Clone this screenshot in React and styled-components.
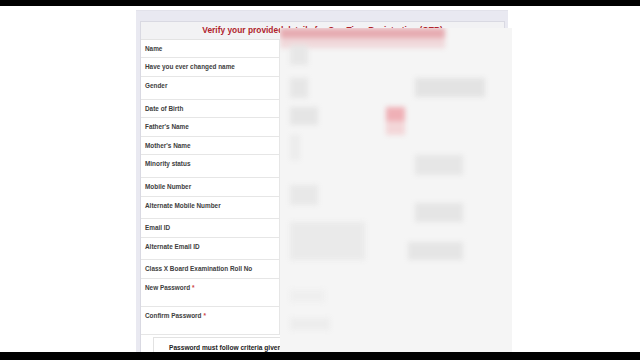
import React from 'react';
import styled, { createGlobalStyle } from 'styled-components';

const GlobalStyle = createGlobalStyle`
  body {
    margin: 0;
    background: #fff;
    font-family: "Liberation Sans", Arial, sans-serif;
  }
`;

const Screen = styled.div`
  width: 640px;
  height: 360px;
  display: flex;
  flex-direction: column;
  overflow: hidden;
`;

const Bar = styled.div`
  height: ${(p) => p.h}px;
  background: #000;
  flex-shrink: 0;
`;

const Stage = styled.div`
  flex: 1;
  position: relative;
  overflow: hidden;
  padding: 4px 0 0 136px;
`;

const Panel = styled.div`
  width: 372px;
  background: #e9e9f1;
  padding: 10px 3px 0 4px;
  box-sizing: border-box;
  border-top: 1px solid #e2e2ea;
`;

const Table = styled.div`
  background: #fff;
  border: 1px solid #d9d9e2;
  border-bottom: none;
`;

const Header = styled.div`
  height: 18px;
  background: #f2f2f4;
  border-bottom: 1px solid #e3e3e3;
  box-sizing: border-box;
  color: #b0232b;
  font-weight: bold;
  font-size: 8.4px;
  line-height: 17px;
  text-align: center;
  white-space: nowrap;
`;

const Row = styled.div`
  display: grid;
  grid-template-columns: 139px 1fr;
  height: ${(p) => p.h}px;
  border-bottom: 1px solid #e6e6e6;
  box-sizing: border-box;
`;

const Label = styled.div`
  padding: 5px 0 0 4px;
  font-size: 6.4px;
  font-weight: bold;
  line-height: 8px;
  color: #3d3d3d;
  border-right: 1px solid #e6e6e6;
  white-space: nowrap;
`;

const Star = styled.span`
  color: #c44;
  margin-left: 2px;
`;

const NoteBox = styled.div`
  margin: 2px 0 0 12px;
  border: 1px solid #e2e2e2;
  border-bottom: none;
  padding: 6px 0 0 15px;
  font-size: 6.6px;
  line-height: 8px;
  font-weight: bold;
  color: #222;
  white-space: nowrap;
  height: 20px;
`;

const Mosaic = styled.div`
  position: absolute;
  left: 280px;
  top: 22px;
  width: 232px;
  bottom: 0;
  background: #f5f5f5;
  overflow: hidden;
`;

const Blur = styled.div`
  position: absolute;
  inset: 0;
  filter: blur(2.4px);
`;

const Cell = styled.div`
  position: absolute;
  background: ${(p) => p.c};
`;

const rows = [
  ['Name', 18],
  ['Have you ever changed name', 19],
  ['Gender', 23],
  ['Date of Birth', 18],
  ["Father's Name", 19],
  ["Mother's Name", 18],
  ['Minority status', 23],
  ['Mobile Number', 19],
  ['Alternate Mobile Number', 22],
  ['Email ID', 19],
  ['Alternate Email ID', 22],
  ['Class X Board Examination Roll No', 19],
  ['New Password', 28, true],
  ['Confirm Password', 28, true],
];

const cells = [
  [0, 0, 165, 10, '#e6abb1'],
  [0, 10, 165, 10, '#f0d8da'],
  [10, 17, 18, 20, '#e7e7e7'],
  [10, 50, 18, 20, '#e6e6e6'],
  [135, 50, 70, 19, '#e3e3e3'],
  [10, 79, 28, 18, '#e5e5e5'],
  [106, 79, 19, 14, '#efb0b6'],
  [106, 93, 19, 14, '#f3d6d8'],
  [10, 107, 10, 25, '#ececec'],
  [135, 127, 48, 20, '#e6e6e6'],
  [10, 157, 28, 20, '#e8e8e8'],
  [135, 175, 48, 19, '#e5e5e5'],
  [10, 194, 75, 38, '#eaeaea'],
  [128, 214, 55, 18, '#e5e5e5'],
  [10, 262, 35, 12, '#efefef'],
  [10, 290, 40, 12, '#ededed'],
];

export default function App() {
  return (
    <Screen>
      <GlobalStyle />
      <Bar h={6} />
      <Stage>
        <Panel>
          <Table>
            <Header>Verify your provided details for One Time Registration (OTR)</Header>
            {rows.map(([label, h, req]) => (
              <Row key={label} h={h}>
                <Label>
                  {label}
                  {req && <Star>*</Star>}
                </Label>
                <div />
              </Row>
            ))}
            <NoteBox>Password must follow criteria given below</NoteBox>
          </Table>
        </Panel>
        <Mosaic>
          <Blur>
            {cells.map(([x, y, w, h, c], i) => (
              <Cell key={i} c={c} style={{ left: x, top: y, width: w, height: h }} />
            ))}
          </Blur>
        </Mosaic>
      </Stage>
      <Bar h={8} />
    </Screen>
  );
}
